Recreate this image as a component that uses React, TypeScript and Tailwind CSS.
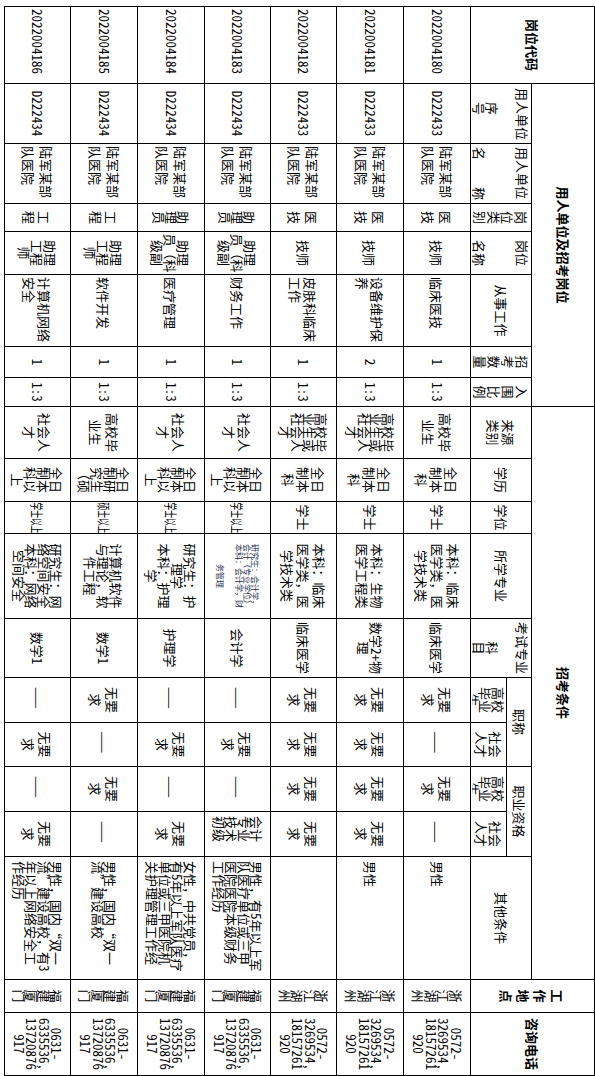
import React from "react"

type V = string | [string, string]

const cellBase = "border border-black p-0 align-middle overflow-hidden"

// column classes for the data rows
const colCls = [
  "text-left pl-[2px]",
  "text-center",
  "text-left pl-[2px] leading-[18px]",
  "text-center leading-[17px]",
  "text-center leading-[13px]",
  "text-left pl-[2px] leading-[15px]",
  "text-center",
  "text-center",
  "text-center leading-[17px]",
  "text-center leading-[15px]",
  "text-center",
  "text-center leading-[16px]",
  "text-center leading-[13px]",
  "text-center leading-[17px]",
  "text-center leading-[17px]",
  "text-center leading-[17px]",
  "text-center leading-[17px]",
  "text-left pl-[4px] leading-[12.5px]",
  "text-center leading-[12.5px]",
  "text-center leading-[12.5px]",
]

const SQ = "__SQ__"
const SMALL = "__SMALL__"

const four: [string, string] = ["社会人|才", "text-center leading-[15px]"]
const src4: [string, string] = ["高校毕|业生或|社会人|才", "text-center leading-[12px]"]
const edu4: [string, string] = ["全日|制本|科以|上", "text-center leading-[13px]"]
const zl: [string, string] = ["助|理|员", "text-center leading-[12px]"]
const gc: [string, string] = ["工|程", "text-center leading-[15px]"]
const zlk: [string, string] = ["助理|员（科|级副", "text-center leading-[13px]"]
const xmhz = "浙|江|湖|州"
const fjxm = "福|建|厦|门"
const tel1 = "0572-|3269534,|18157261|920"
const tel2 = "0631-|6335536,|13720876|917"

const rows: { h: string; cells: V[] }[] = [
  {
    h: "h-[67px]",
    cells: ["2022004180", "D222433", "陆军某部|队医院", "医|技", "技师", "临床医技", "1", "1:3", "高校毕|业生", "全日|制本|科", "学士", "本科：临床|医学类，医|学技术类", "临床医学", "无要|求", "——", "无要|求", "——", "男性", xmhz, tel1],
  },
  {
    h: "h-[67px]",
    cells: ["2022004181", "D222433", "陆军某部|队医院", "医|技", "技师", "设备维护保|养", "2", "1:3", src4, "全日|制本|科", "学士", ["本科：生物|医学工程类", "text-center leading-[15px]"], "数学2+物|理", "无要|求", "无要|求", "无要|求", "无要|求", "男性", xmhz, tel1],
  },
  {
    h: "h-[66px]",
    cells: ["2022004182", "D222433", "陆军某部|队医院", "医|技", "技师", "皮肤科临床|工作", "1", "1:3", src4, "全日|制本|科", "学士", "本科：临床|医学类，医|学技术类", "临床医学", "无要|求", "无要|求", "无要|求", "无要|求", "", xmhz, tel1],
  },
  {
    h: "h-[66px]",
    cells: ["2022004183", "D222434", "陆军某部|队医院", zl, zlk, "财务工作", "1", "1:3", four, edu4, SQ + "学士以上", SMALL, "会计学", "——", "无要|求", "——", ["会计|专业|技术|初级", "text-left pl-[4px] leading-[12.5px]"], "男性，有5年以上军|队医疗单位或三甲|医院医院本级财务|工作经历", fjxm, tel2],
  },
  {
    h: "h-[67px]",
    cells: ["2022004184", "D222434", "陆军某部|队医院", zl, zlk, "医疗管理", "1", "1:3", four, edu4, SQ + "学士以上", ["研究生：护|理学|本科：护理|学", "text-center leading-[13px]"], "护理学", "——", "无要|求", "——", "无要|求", "女性，中共党员，|有5年以上军队医疗|单位或三甲医院机|关护理管理工作经", fjxm, tel2],
  },
  {
    h: "h-[67px]",
    cells: ["2022004185", "D222434", "陆军某部|队医院", gc, "助理|工程|师", "软件开发", "1", "1:3", "高校毕|业生", ["全日|制研|究生|（硕", "text-center leading-[13px]"], SQ + "硕士以上", ["计算机软件|与理论，软|件工程", "text-center leading-[13px]"], "数学1", "无要|求", "——", "无要|求", "——", "男性，国内“双一|流”建设高校", fjxm, tel2],
  },
  {
    h: "h-[66px]",
    cells: ["2022004186", "D222434", "陆军某部|队医院", gc, "助理|工程|师", "计算机网络|安全", "1", "1:3", four, edu4, SQ + "学士以上", ["研究生：网|络空间安全|本科：网络|空间安全", "text-center leading-[12.5px]"], "数学1", "——", "无要|求", "——", "无要|求", "男性，国内“双一|流”建设高校，有3|年以上网络安全工|作经历", fjxm, tel2],
  },
]

function Lines({ t }: { t: string }) {
  return (
    <>
      {t.split("|").map((l, i) => (
        <div key={i} className={l === "——" ? "whitespace-nowrap tracking-[4px]" : "whitespace-nowrap"}>
          {l || "\u00a0"}
        </div>
      ))}
    </>
  )
}

function DataCell({ v, j }: { v: V; j: number }) {
  if (typeof v === "string" && v.startsWith(SQ)) {
    return (
      <td className={cellBase}>
        <div className="flex justify-center">
          <span className="inline-block shrink-0 whitespace-nowrap scale-x-[0.6]">{v.slice(SQ.length)}</span>
        </div>
      </td>
    )
  }
  if (v === SMALL) {
    return (
      <td className={cellBase + " text-center"}>
        <div className="text-[8px] leading-[8px] text-[#1b2a4a]">
          <div className="whitespace-nowrap">研究生：会计学，</div>
          <div className="whitespace-nowrap">会计（专业学位）</div>
          <div className="whitespace-nowrap">本科：会计学，财</div>
          <div className="whitespace-nowrap mt-[11px]">务管理</div>
        </div>
      </td>
    )
  }
  const [t, cls] = typeof v === "string" ? [v, colCls[j]] : v
  return (
    <td className={cellBase + " " + cls}>
      <Lines t={t} />
    </td>
  )
}

export default function App() {
  return (
    <div className="w-[595px] h-[1076px] overflow-hidden bg-white">
      <div className="w-[1076px] h-[595px] origin-top-left translate-x-[595px] rotate-90 font-['Noto_Sans_Mono_CJK_SC','Noto_Sans_CJK_SC',sans-serif] font-light text-[13px] text-black">
        <table className="border-collapse table-fixed w-[1069px] ml-[3px] mt-[3px]">
          <colgroup>
            <col className="w-[77px]" />
            <col className="w-[60px]" />
            <col className="w-[60px]" />
            <col className="w-[28px]" />
            <col className="w-[43px]" />
            <col className="w-[72px]" />
            <col className="w-[31px]" />
            <col className="w-[29px]" />
            <col className="w-[52px]" />
            <col className="w-[43px]" />
            <col className="w-[32px]" />
            <col className="w-[85px]" />
            <col className="w-[59px]" />
            <col className="w-[45px]" />
            <col className="w-[44px]" />
            <col className="w-[45px]" />
            <col className="w-[45px]" />
            <col className="w-[123px]" />
            <col className="w-[33px]" />
            <col className="w-[63px]" />
          </colgroup>
          <tbody>
            <tr className="h-[63px]">
              <td rowSpan={3} className={cellBase + " text-center font-bold"}>岗位代码</td>
              <td colSpan={7} className={cellBase + " text-center font-bold"}>用人单位及招考岗位</td>
              <td colSpan={10} className={cellBase + " text-center font-bold"}>招考条件</td>
              <td rowSpan={3} className={cellBase + " text-center font-bold leading-[17px]"}>
                <Lines t="工|作|地|点" />
              </td>
              <td rowSpan={3} className={cellBase + " text-center font-bold"}>咨询电话</td>
            </tr>
            <tr className="h-[25px]">
              <td rowSpan={2} className={cellBase + " align-top"}>
                <div className="flex h-[58px] flex-col justify-between pl-[4px] pt-[2px] leading-[13px]">
                  <div className="whitespace-nowrap">用人单位</div>
                  <div className="pl-[14px]">
                    <div>序</div>
                    <div>号</div>
                  </div>
                </div>
              </td>
              <td rowSpan={2} className={cellBase + " align-top"}>
                <div className="flex h-[58px] flex-col justify-between px-[3px] pt-[2px] leading-[13px]">
                  <div className="whitespace-nowrap">用人单位</div>
                  <div className="flex justify-between">
                    <span>名</span>
                    <span>称</span>
                  </div>
                </div>
              </td>
              <td rowSpan={2} className={cellBase + " text-center leading-[13.5px]"}>
                <Lines t="岗|位|类|别" />
              </td>
              <td rowSpan={2} className={cellBase + " align-top text-center"}>
                <div className="flex h-[58px] flex-col justify-between pt-[2px] leading-[13px]">
                  <div>岗位</div>
                  <div>名称</div>
                </div>
              </td>
              <td rowSpan={2} className={cellBase + " text-center"}>从事工作</td>
              <td rowSpan={2} className={cellBase + " text-center leading-[14px]"}>
                <Lines t="招|考|数|量" />
              </td>
              <td rowSpan={2} className={cellBase + " text-center leading-[14px]"}>
                <Lines t="入|围|比|例" />
              </td>
              <td rowSpan={2} className={cellBase + " text-center leading-[15px]"}>
                <Lines t="来源|类别" />
              </td>
              <td rowSpan={2} className={cellBase + " text-center"}>学历</td>
              <td rowSpan={2} className={cellBase + " text-center"}>学位</td>
              <td rowSpan={2} className={cellBase + " text-center"}>所学专业</td>
              <td rowSpan={2} className={cellBase + " align-top text-center"}>
                <div className="flex h-[58px] flex-col justify-between pt-[2px] leading-[13px]">
                  <div className="whitespace-nowrap">考试专业</div>
                  <div>
                    <div>科</div>
                    <div>目</div>
                  </div>
                </div>
              </td>
              <td colSpan={2} className={cellBase + " text-center"}>职称</td>
              <td colSpan={2} className={cellBase + " text-center"}>职业资格</td>
              <td rowSpan={2} className={cellBase + " text-center"}>其他条件</td>
            </tr>
            <tr className="h-[36px]">
              <td className={cellBase + " align-top text-center"}>
                <div className="h-[34px] overflow-hidden pt-[2px] leading-[12.5px]">
                  <Lines t="高校|毕业|生" />
                </div>
              </td>
              <td className={cellBase + " text-center leading-[14px]"}>
                <Lines t="社会|人才" />
              </td>
              <td className={cellBase + " align-top text-center"}>
                <div className="h-[34px] overflow-hidden pt-[2px] leading-[12.5px]">
                  <Lines t="高校|毕业|生" />
                </div>
              </td>
              <td className={cellBase + " text-center leading-[14px]"}>
                <Lines t="社会|人才" />
              </td>
            </tr>
            {rows.map((r, i) => (
              <tr key={i} className={r.h}>
                {r.cells.map((v, j) => (
                  <DataCell key={j} v={v} j={j} />
                ))}
              </tr>
            ))}
          </tbody>
        </table>
      </div>
    </div>
  )
}
